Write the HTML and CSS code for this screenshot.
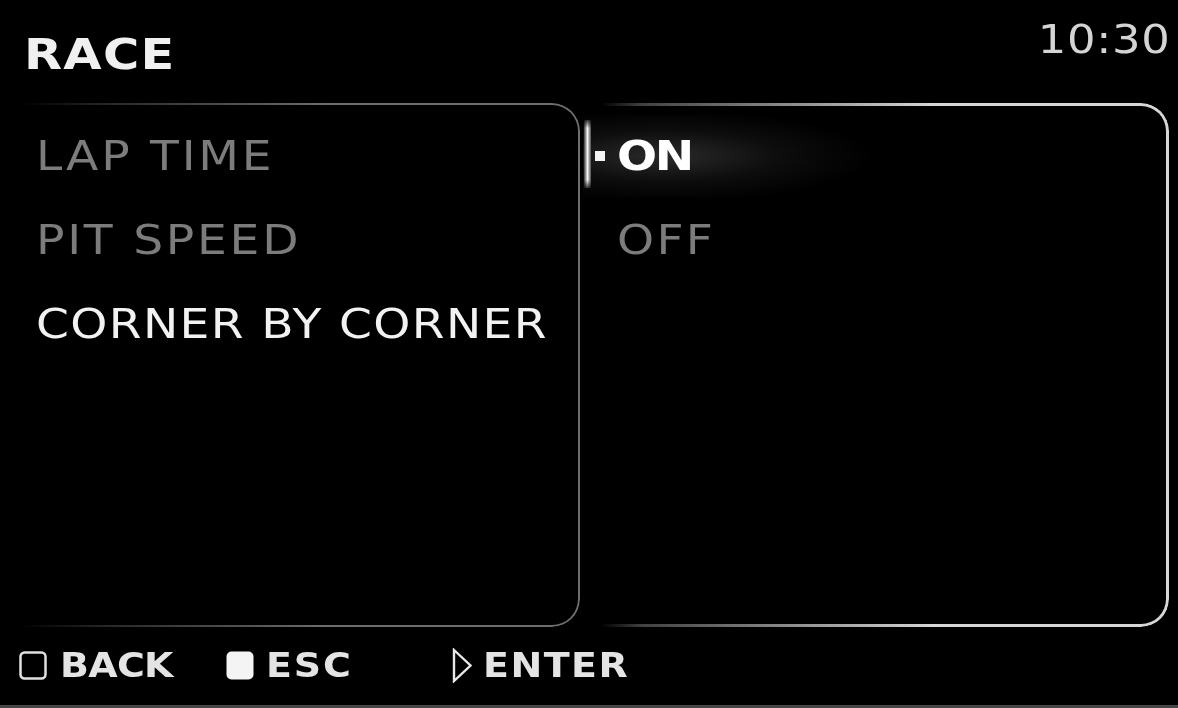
FILE: index.html
```html
<!DOCTYPE html>
<html>
<head>
<meta charset="utf-8">
<link rel="stylesheet" href="styles.css">
</head>
<body>
<div class="screen">
  <header class="header">
    <div class="title"><span class="wide">RACE</span></div>
    <div class="clock"><span class="wide wide-right">10:30</span></div>
  </header>
  <main class="panels">
    <section class="panel panel-left">
      <div class="item dim"><span class="wide">LAP TIME</span></div>
      <div class="item dim"><span class="wide">PIT SPEED</span></div>
      <div class="item active"><span class="wide">CORNER BY CORNER</span></div>
    </section>
    <section class="panel panel-right">
      <div class="opt selected">
        <span class="sel-bar"></span>
        <span class="bullet"></span>
        <span class="opt-label wide">ON</span>
      </div>
      <div class="opt">
        <span class="bullet hidden"></span>
        <span class="opt-label wide dim">OFF</span>
      </div>
    </section>
  </main>
  <footer class="footer">
    <div class="key key-back">
      <svg class="ico" width="28" height="29" viewBox="0 0 28 29"><rect x="1.5" y="1.5" width="25" height="26" rx="4" fill="none" stroke="#e0e0e0" stroke-width="2.5"/></svg>
      <span class="key-label wide">BACK</span>
    </div>
    <div class="key key-esc">
      <svg class="ico" width="28" height="29" viewBox="0 0 28 29"><rect x="0.5" y="0.5" width="27" height="28" rx="5" fill="#f4f4f4"/></svg>
      <span class="key-label wide">ESC</span>
    </div>
    <div class="key key-enter">
      <svg class="ico" width="21" height="35" viewBox="0 0 21 35"><polygon points="2,2 18.5,17.5 2,33" fill="none" stroke="#e8e8e8" stroke-width="2.4" stroke-linejoin="miter"/></svg>
      <span class="key-label wide">ENTER</span>
    </div>
  </footer>
</div>
</body>
</html>
```
FILE: styles.css
```css
html, body {
  margin: 0;
  padding: 0;
  background: #000;
}
body {
  width: 1178px;
  height: 708px;
  overflow: hidden;
  font-family: "DejaVu Sans", "Liberation Sans", sans-serif;
}
.wide {
  display: inline-block;
  transform: scaleX(1.15);
  transform-origin: left center;
  white-space: nowrap;
}
.wide-right {
  transform-origin: right center;
}
.screen {
  width: 1178px;
  height: 708px;
  box-sizing: border-box;
  border-bottom: 3px solid #464646;
  display: flex;
  flex-direction: column;
}
.header {
  height: 103px;
  flex: none;
  display: flex;
  justify-content: space-between;
  align-items: flex-start;
  padding: 0 8px 0 24px;
  box-sizing: border-box;
}
.title {
  margin-top: 33px;
  font-size: 43px;
  line-height: 43px;
  font-weight: bold;
  letter-spacing: 1.1px;
  color: #f0f0f0;
}
.clock {
  margin-top: 20px;
  font-size: 39px;
  line-height: 39px;
  letter-spacing: 0.6px;
  color: #d4d4d4;
}
.panels {
  height: 524px;
  flex: none;
  display: flex;
}
.panel {
  position: relative;
  box-sizing: border-box;
  height: 524px;
  padding-top: 11px;
}
.panel::before {
  content: "";
  position: absolute;
  inset: 0;
  border-style: solid;
  border-left: none;
  pointer-events: none;
}
.panel-left {
  width: 560px;
  margin-left: 20px;
  padding-left: 16px;
}
.panel-left::before {
  border-width: 2px 2px 2px 0;
  border-color: #6e6e6e;
  border-radius: 0 28px 28px 0;
  -webkit-mask-image: linear-gradient(to right, transparent 0, rgba(0,0,0,0.35) 15%, #000 55%);
  mask-image: linear-gradient(to right, transparent 0, rgba(0,0,0,0.35) 15%, #000 55%);
}
.panel-right {
  width: 586px;
  margin-left: 3px;
}
.panel-right::before {
  border-width: 3px 3px 3px 0;
  border-color: #d6d6d6;
  border-radius: 0 28px 28px 0;
  -webkit-mask-image: linear-gradient(to right, transparent 0, transparent 3%, rgba(0,0,0,0.3) 10%, #000 60%);
  mask-image: linear-gradient(to right, transparent 0, transparent 3%, rgba(0,0,0,0.3) 10%, #000 60%);
}
.item {
  height: 84px;
  font-size: 41px;
  line-height: 84px;
  letter-spacing: 2.4px;
  white-space: nowrap;
}
.dim {
  color: #7c7c7c;
}
.active {
  color: #f2f2f2;
  letter-spacing: 1.2px;
}
.opt {
  position: relative;
  height: 84px;
  display: flex;
  align-items: center;
  padding-left: 12px;
}
.opt.selected {
  background: radial-gradient(ellipse 210px 46px at 80px 50%, rgba(255,255,255,0.17), rgba(255,255,255,0.05) 55%, transparent 100%);
}
.sel-bar {
  position: absolute;
  left: 1px;
  top: 6px;
  width: 7px;
  height: 68px;
  background: linear-gradient(to right, #3a3a3a, #f6f6f6 50%, #4a4a4a);
  -webkit-mask-image: linear-gradient(to bottom, rgba(0,0,0,0.2) 0, #000 12%, #000 88%, rgba(0,0,0,0.2) 100%);
  mask-image: linear-gradient(to bottom, rgba(0,0,0,0.2) 0, #000 12%, #000 88%, rgba(0,0,0,0.2) 100%);
}
.bullet {
  width: 10px;
  height: 10px;
  background: #f4f4f4;
  margin-right: 12px;
  flex: none;
}
.bullet.hidden {
  visibility: hidden;
}
.opt-label {
  font-size: 41px;
  line-height: 84px;
  letter-spacing: 2px;
}
.selected .opt-label {
  font-weight: bold;
  letter-spacing: -2px;
  color: #fff;
}
.footer {
  flex: 1;
  display: flex;
  align-items: flex-start;
  padding: 21px 0 0 19px;
  box-sizing: border-box;
}
.key {
  display: flex;
  align-items: center;
  height: 35px;
}
.key-back {
  width: 207px;
  gap: 13px;
}
.key-esc {
  width: 226px;
  gap: 12px;
}
.key-enter {
  gap: 10px;
}
.ico {
  display: block;
  flex: none;
}
.key-label {
  font-size: 33px;
  line-height: 35px;
  font-weight: bold;
  letter-spacing: 1.3px;
  color: #e4e4e4;
}
.key-esc .key-label {
  letter-spacing: 1.6px;
}
.key-back .key-label {
  letter-spacing: -0.6px;
}
```
